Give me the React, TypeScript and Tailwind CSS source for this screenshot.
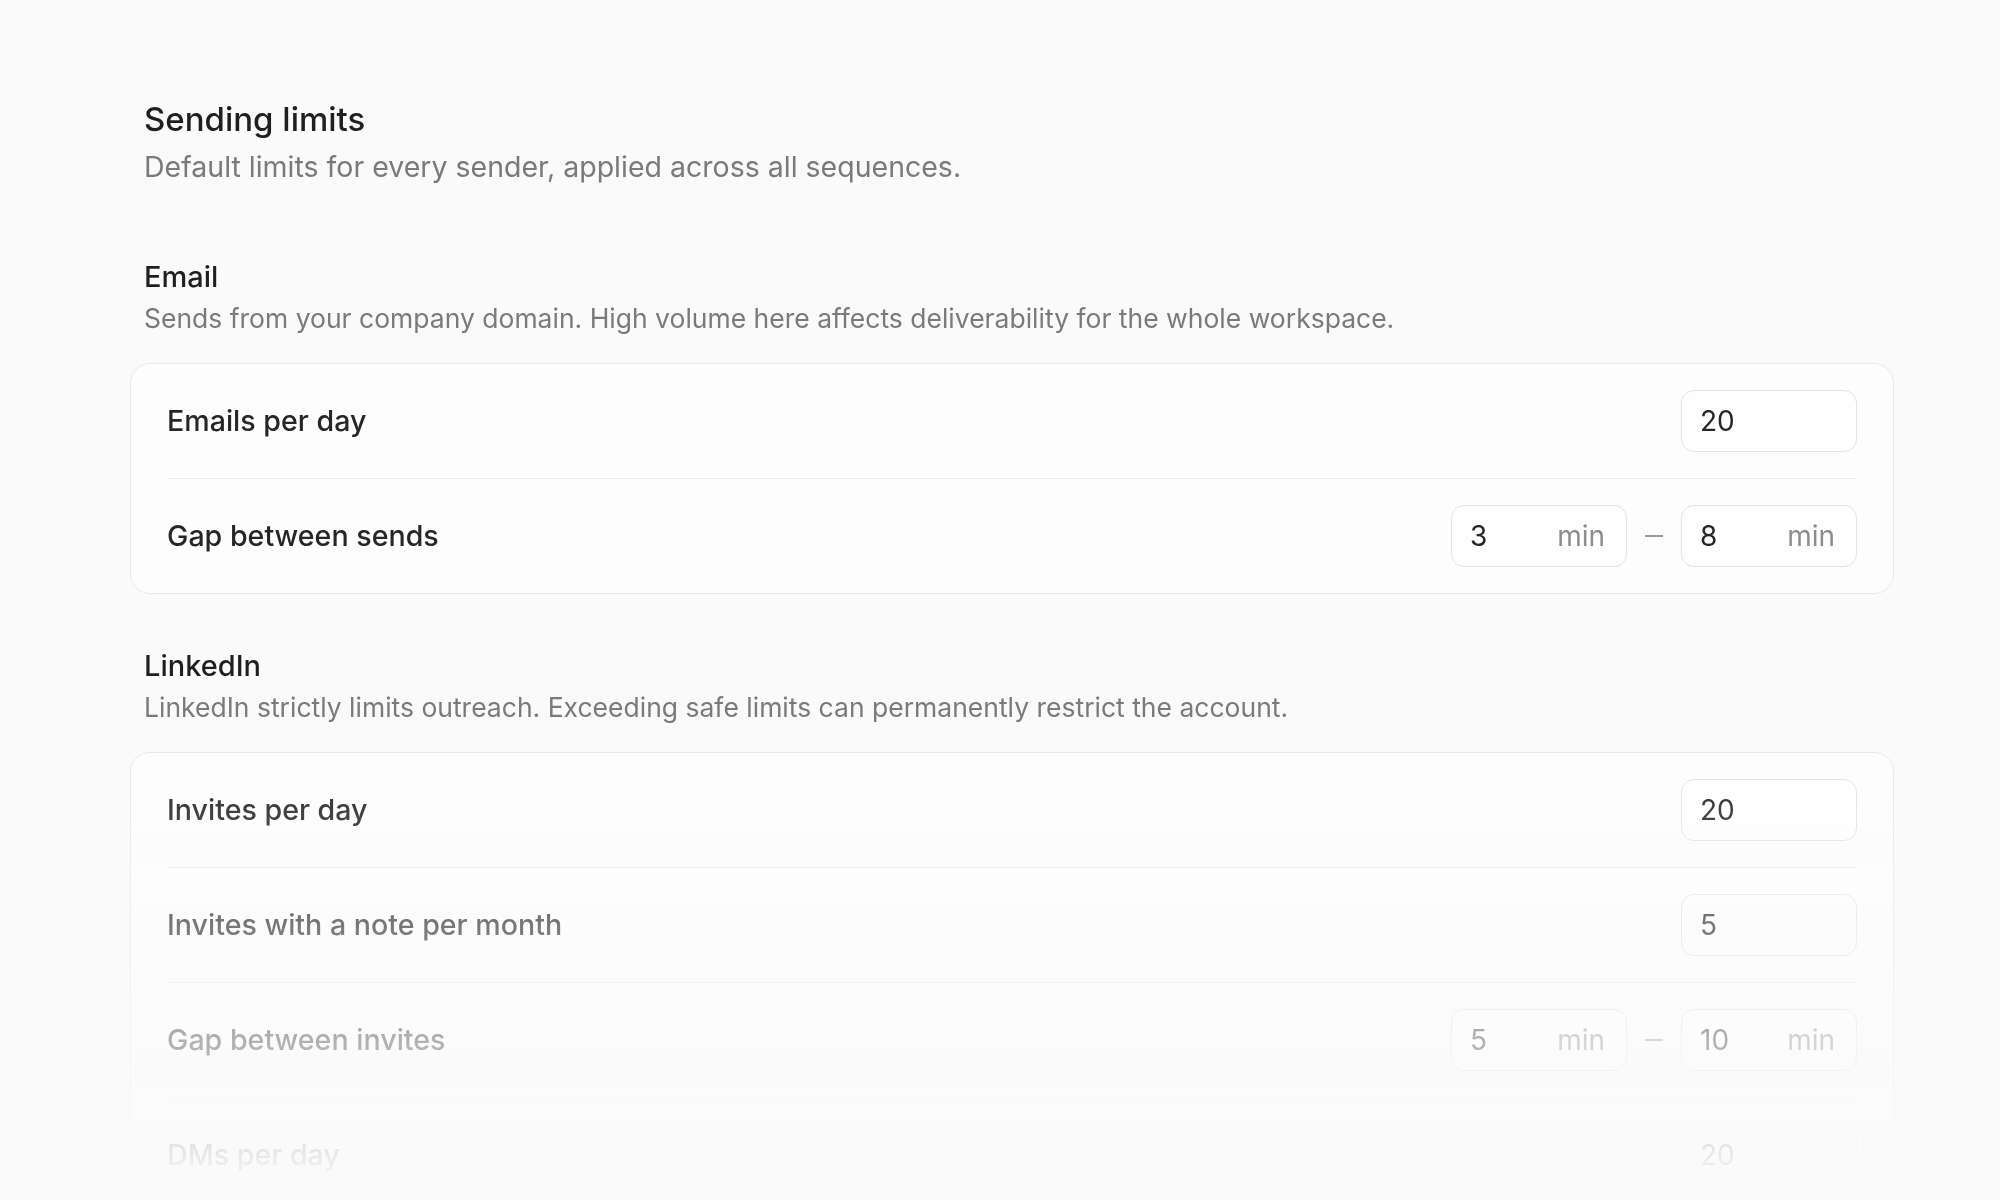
import type { ReactNode } from "react";

type Field =
  | { kind: "single"; value: string }
  | { kind: "range"; from: string; to: string; unit: string };

type LimitRow = { label: string; field: Field };

const EMAIL_ROWS: LimitRow[] = [
  { label: "Emails per day", field: { kind: "single", value: "20" } },
  {
    label: "Gap between sends",
    field: { kind: "range", from: "3", to: "8", unit: "min" },
  },
];

const LINKEDIN_ROWS: LimitRow[] = [
  { label: "Invites per day", field: { kind: "single", value: "20" } },
  { label: "Invites with a note per month", field: { kind: "single", value: "5" } },
  {
    label: "Gap between invites",
    field: { kind: "range", from: "5", to: "10", unit: "min" },
  },
  { label: "DMs per day", field: { kind: "single", value: "20" } },
];

function NumberBox({ value, unit }: { value: string; unit?: string }) {
  return (
    <div className="flex h-[62px] w-[176px] items-center justify-between rounded-[13px] border border-[#e3e3e3] bg-[#fefefe] pl-[18px] pr-[21px]">
      <span className="text-[28px] text-[#262626]">{value}</span>
      {unit && <span className="text-[28px] text-[#8c8c8c]">{unit}</span>}
    </div>
  );
}

function FieldControl({ field }: { field: Field }) {
  if (field.kind === "single") return <NumberBox value={field.value} />;
  return (
    <div className="flex items-center gap-[18px]">
      <NumberBox value={field.from} unit={field.unit} />
      <span className="block h-[2px] w-[18px] bg-[#999999]" />
      <NumberBox value={field.to} unit={field.unit} />
    </div>
  );
}

function LimitsCard({ rows }: { rows: LimitRow[] }) {
  return (
    <div className="w-[1764px] rounded-[20px] border border-[#e8e8e8] bg-[#fdfdfd] px-9">
      {rows.map((row, i) => (
        <div
          key={row.label}
          className={
            "flex items-center justify-between py-[26px]" +
            (i > 0 ? " border-t border-[#ebebeb]" : "")
          }
        >
          <span className="text-[28.6px] font-medium text-[#262626]">{row.label}</span>
          <FieldControl field={row.field} />
        </div>
      ))}
    </div>
  );
}

function Section({
  title,
  description,
  className,
  children,
}: {
  title: string;
  description: string;
  className: string;
  children: ReactNode;
}) {
  return (
    <section className={className}>
      <div className="px-[14px]">
        <h2 className="text-[29px] leading-[34px] font-medium text-[#1f1f1f]">{title}</h2>
        <p className="mt-2 text-[26.5px] leading-[32px] text-[#7a7a7a]">{description}</p>
      </div>
      <div className="mt-[29px]">{children}</div>
    </section>
  );
}

export default function App() {
  return (
    <div className="h-[1200px] overflow-hidden bg-[#fafafa] font-['Inter',sans-serif]">
      <div className="pl-[130px] pt-[101px] [mask-image:linear-gradient(to_bottom,#000_760px,transparent_1190px)] [-webkit-mask-image:linear-gradient(to_bottom,#000_760px,transparent_1190px)]">
        <header className="px-[14px]">
          <h1 className="text-[33px] leading-[36px] font-medium text-[#1f1f1f]">Sending limits</h1>
          <p className="mt-[14px] text-[28.5px] leading-[32px] text-[#7a7a7a]">
            Default limits for every sender, applied across all sequences.
          </p>
        </header>

        <Section
          className="mt-[77px]"
          title="Email"
          description="Sends from your company domain. High volume here affects deliverability for the whole workspace."
        >
          <LimitsCard rows={EMAIL_ROWS} />
        </Section>

        <Section
          className="mt-[55px]"
          title="LinkedIn"
          description="LinkedIn strictly limits outreach. Exceeding safe limits can permanently restrict the account."
        >
          <LimitsCard rows={LINKEDIN_ROWS} />
        </Section>
      </div>
    </div>
  );
}
